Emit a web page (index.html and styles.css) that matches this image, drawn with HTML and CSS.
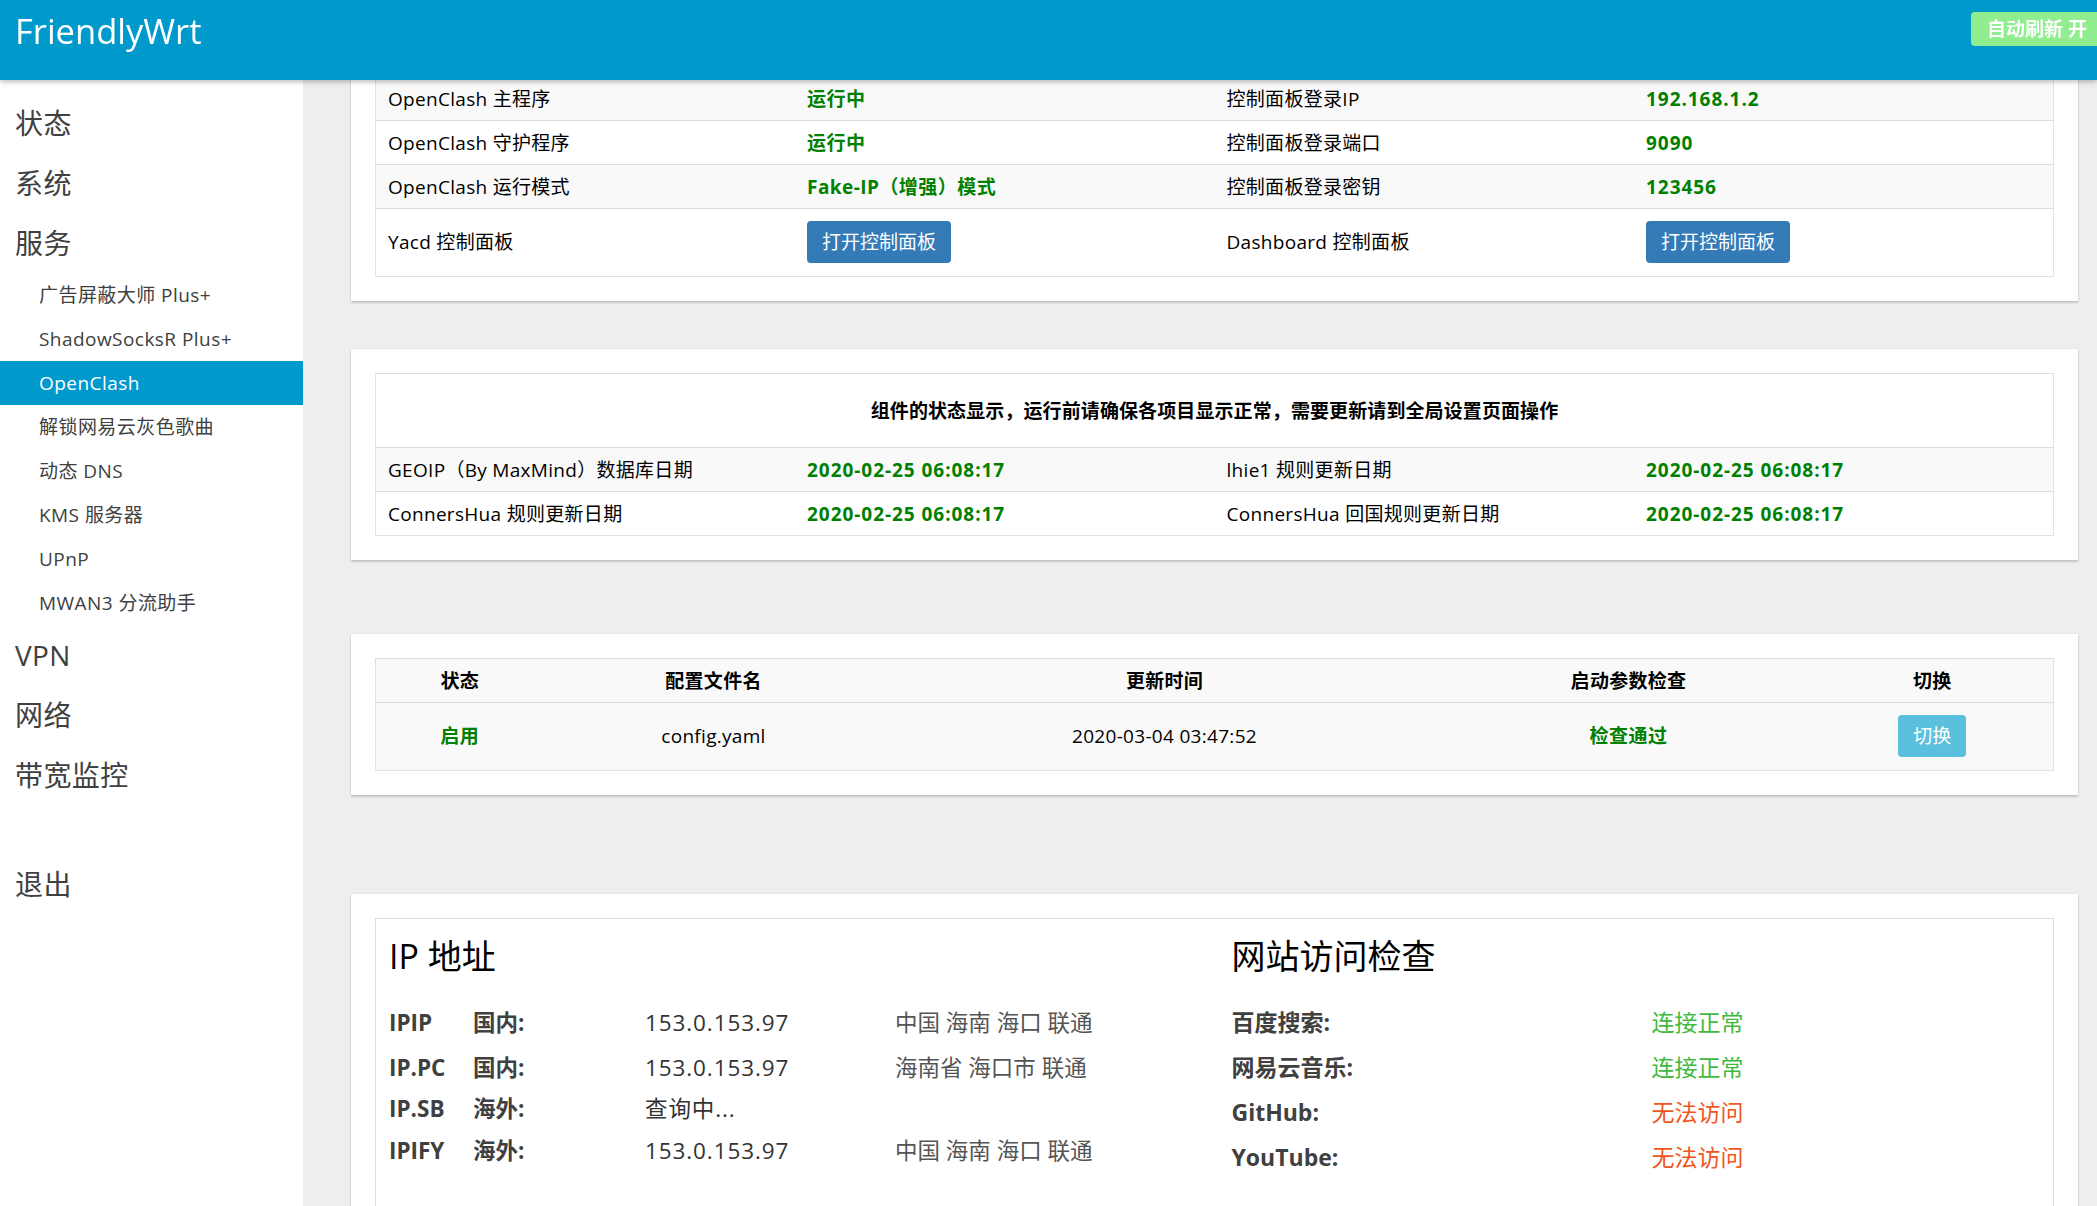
FILE: index.html
```html
<!DOCTYPE html>
<html lang="zh-CN">
<head>
<meta charset="utf-8">
<title>FriendlyWrt - OpenClash</title>
<link rel="stylesheet" href="styles.css">
</head>
<body>
<header class="topbar">
  <div class="brand">FriendlyWrt</div>
  <span class="refresh">自动刷新 开</span>
</header>
<div class="layout">
  <nav class="sidebar">
    <ul class="menu">
      <li class="menu-item"><span class="menu-label">状态</span></li>
      <li class="menu-item"><span class="menu-label">系统</span></li>
      <li class="menu-item"><span class="menu-label">服务</span>
        <ul class="submenu">
          <li>广告屏蔽大师 Plus+</li>
          <li>ShadowSocksR Plus+</li>
          <li class="active">OpenClash</li>
          <li>解锁网易云灰色歌曲</li>
          <li>动态 DNS</li>
          <li>KMS 服务器</li>
          <li>UPnP</li>
          <li>MWAN3 分流助手</li>
        </ul>
      </li>
      <li class="menu-item"><span class="menu-label">VPN</span></li>
      <li class="menu-item"><span class="menu-label">网络</span></li>
      <li class="menu-item"><span class="menu-label">带宽监控</span></li>
      <li class="menu-item logout"><span class="menu-label">退出</span></li>
    </ul>
  </nav>
  <main class="content">
    <section class="card card-status">
      <table class="tbl cols4">
        <tbody>
          <tr><td>OpenClash 主程序</td><td class="ok">运行中</td><td>控制面板登录IP</td><td class="ok num">192.168.1.2</td></tr>
          <tr><td>OpenClash 守护程序</td><td class="ok">运行中</td><td>控制面板登录端口</td><td class="ok num">9090</td></tr>
          <tr><td>OpenClash 运行模式</td><td class="ok">Fake-IP（增强）模式</td><td>控制面板登录密钥</td><td class="ok num">123456</td></tr>
          <tr class="btn-row"><td>Yacd 控制面板</td><td><span class="btn btn-primary">打开控制面板</span></td><td>Dashboard 控制面板</td><td><span class="btn btn-primary">打开控制面板</span></td></tr>
        </tbody>
      </table>
    </section>

    <section class="card card-rules">
      <table class="tbl cols4">
        <thead>
          <tr><th colspan="4" class="caption-cell">组件的状态显示，运行前请确保各项目显示正常，需要更新请到全局设置页面操作</th></tr>
        </thead>
        <tbody>
          <tr><td>GEOIP（By MaxMind）数据库日期</td><td class="ok num">2020-02-25 06:08:17</td><td>lhie1 规则更新日期</td><td class="ok num">2020-02-25 06:08:17</td></tr>
          <tr><td>ConnersHua 规则更新日期</td><td class="ok num">2020-02-25 06:08:17</td><td>ConnersHua 回国规则更新日期</td><td class="ok num">2020-02-25 06:08:17</td></tr>
        </tbody>
      </table>
    </section>

    <section class="card card-config">
      <table class="tbl centered">
        <colgroup>
          <col class="c-state"><col class="c-file"><col class="c-time"><col class="c-check"><col class="c-switch">
        </colgroup>
        <thead>
          <tr class="head-row"><th>状态</th><th>配置文件名</th><th>更新时间</th><th>启动参数检查</th><th>切换</th></tr>
        </thead>
        <tbody>
          <tr class="btn-row"><td class="ok">启用</td><td>config.yaml</td><td>2020-03-04 03:47:52</td><td class="ok">检查通过</td><td><span class="btn btn-info">切换</span></td></tr>
        </tbody>
      </table>
    </section>

    <section class="card card-ip">
      <div class="ip-box">
        <div class="ip-col">
          <h3 class="ip-title">IP 地址</h3>
          <div class="ip-row"><b class="ip-src">IPIP</b><b class="ip-zone">国内:</b><span class="ip-addr">153.0.153.97</span><span class="ip-loc">中国 海南 海口 联通</span></div>
          <div class="ip-row"><b class="ip-src">IP.PC</b><b class="ip-zone">国内:</b><span class="ip-addr">153.0.153.97</span><span class="ip-loc">海南省 海口市 联通</span></div>
          <div class="ip-row"><b class="ip-src">IP.SB</b><b class="ip-zone">海外:</b><span class="ip-addr">查询中...</span></div>
          <div class="ip-row"><b class="ip-src">IPIFY</b><b class="ip-zone">海外:</b><span class="ip-addr">153.0.153.97</span><span class="ip-loc">中国 海南 海口 联通</span></div>
        </div>
        <div class="ip-col site-col">
          <h3 class="ip-title">网站访问检查</h3>
          <div class="site-row"><b class="site-name">百度搜索:</b><span class="good">连接正常</span></div>
          <div class="site-row"><b class="site-name">网易云音乐:</b><span class="good">连接正常</span></div>
          <div class="site-row"><b class="site-name">GitHub:</b><span class="bad">无法访问</span></div>
          <div class="site-row"><b class="site-name">YouTube:</b><span class="bad">无法访问</span></div>
        </div>
      </div>
    </section>
  </main>
</div>
</body>
</html>
```

FILE: styles.css
```css
* { box-sizing: border-box; }
html, body { margin: 0; padding: 0; height: 100%; overflow: hidden; }
body {
  font-family: "Open Sans", "Noto Sans CJK SC", sans-serif;
  background: #eeeeee;
  color: #000;
}

/* header */
.topbar {
  position: fixed;
  top: 0; left: 0; right: 0;
  height: 80px;
  background: #0099cc;
  display: flex;
  align-items: flex-start;
  z-index: 10;
  box-shadow: 0 2px 5px rgba(0,0,0,.26);
  overflow: hidden;
}
.brand {
  color: #fff;
  font-size: 34.5px;
  line-height: 48px;
  margin: 7px 0 0 15px;
}
.refresh {
  margin: 12px -6px 0 auto;
  height: 34px;
  line-height: 34px;
  padding: 0 16px;
  background: #90ee90;
  color: #fff;
  font-weight: bold;
  font-size: 19px;
  border-radius: 4px;
}

/* layout */
.layout { display: flex; min-height: 100%; }
.sidebar {
  width: 303px;
  flex: none;
  background: #fff;
  padding-top: 93px;
}
.menu, .submenu { list-style: none; margin: 0; padding: 0; }
.menu-item { color: #404040; }
.menu-label {
  display: block;
  font-size: 28px;
  line-height: 60px;
  padding-left: 15px;
  letter-spacing: 0.4px;
}
.submenu li {
  font-size: 19px;
  line-height: 44px;
  padding-left: 39px;
  color: #404040;
  letter-spacing: 0.45px;
}
.submenu li.active { background: #0099cc; color: #fff; }
.logout { margin-top: 49px; }

.content {
  flex: 1;
  min-width: 0;
  padding: 52px 19px 0 48px;
}

/* cards */
.card {
  background: #fff;
  padding: 24px;
  box-shadow: 0 2px 2px rgba(0,0,0,.16), 0 0 2px rgba(0,0,0,.10);
}
.card-rules { margin-top: 48px; }
.card-config { margin-top: 74px; }
.card-ip { margin-top: 99px; padding-bottom: 0; }

/* tables */
.tbl {
  width: 100%;
  border-collapse: collapse;
  border: 1px solid #e2e2e2;
  table-layout: fixed;
  font-size: 19px;
  letter-spacing: 0.3px;
}
.tbl td, .tbl th {
  border-top: 1px solid #dddddd;
  padding: 9px 12px 7px;
  line-height: 27px;
  text-align: left;
  font-weight: normal;
  white-space: nowrap;
}
.tbl tbody tr:nth-child(odd) { background: #f9f9f9; }
.tbl .btn-row td { padding: 12px 12px 13px; }
.tbl th.caption-cell {
  text-align: center;
  font-weight: bold;
  padding: 24px 12px 22px;
  letter-spacing: 0.1px;
}
.centered td, .centered th { text-align: center; }
.centered .head-row { background: #f9f9f9; }
.centered .head-row th { font-weight: bold; }
.c-state { width: 168px; }
.c-file { width: 340px; }
.c-time { width: 562px; }
.c-check { width: 366px; }

.ok { color: #008000; font-weight: bold; }
.tbl td.ok { font-weight: bold; letter-spacing: 0.45px; }
.tbl td.num { letter-spacing: 0.95px; }

.btn {
  display: inline-block;
  height: 42px;
  line-height: 42px;
  padding: 0 15px;
  border-radius: 4px;
  color: #fff;
  font-size: 19px;
  letter-spacing: 0;
  vertical-align: middle;
}
.btn-primary { background: #337ab7; }
.btn-info { background: #5bc0de; }

/* IP section */
.ip-box {
  border: 1px solid #dddddd;
  border-bottom: none;
  display: grid;
  grid-template-columns: 1fr 1fr;
  min-height: 320px;
}
.ip-col { padding-left: 13px; }
.site-col { padding-left: 17px; }
.ip-title {
  font-size: 34px;
  font-weight: normal;
  line-height: 41px;
  margin: 17px 0 23px;
  color: #000;
}
.ip-row {
  display: grid;
  grid-template-columns: 84px 172px 250px auto;
  font-size: 22.5px;
  line-height: 38px;
  align-items: center;
}
.ip-src, .ip-zone { color: #404040; font-weight: bold; }
.ip-addr { color: #333; letter-spacing: 0.9px; }
.ip-loc { color: #555; line-height: 45px; }
.site-row {
  display: grid;
  grid-template-columns: 420px auto;
  font-size: 23px;
  line-height: 45px;
}
.site-name { color: #404040; font-weight: bold; }
.good { color: #3fba3f; }
.bad { color: #f0561d; }
```
